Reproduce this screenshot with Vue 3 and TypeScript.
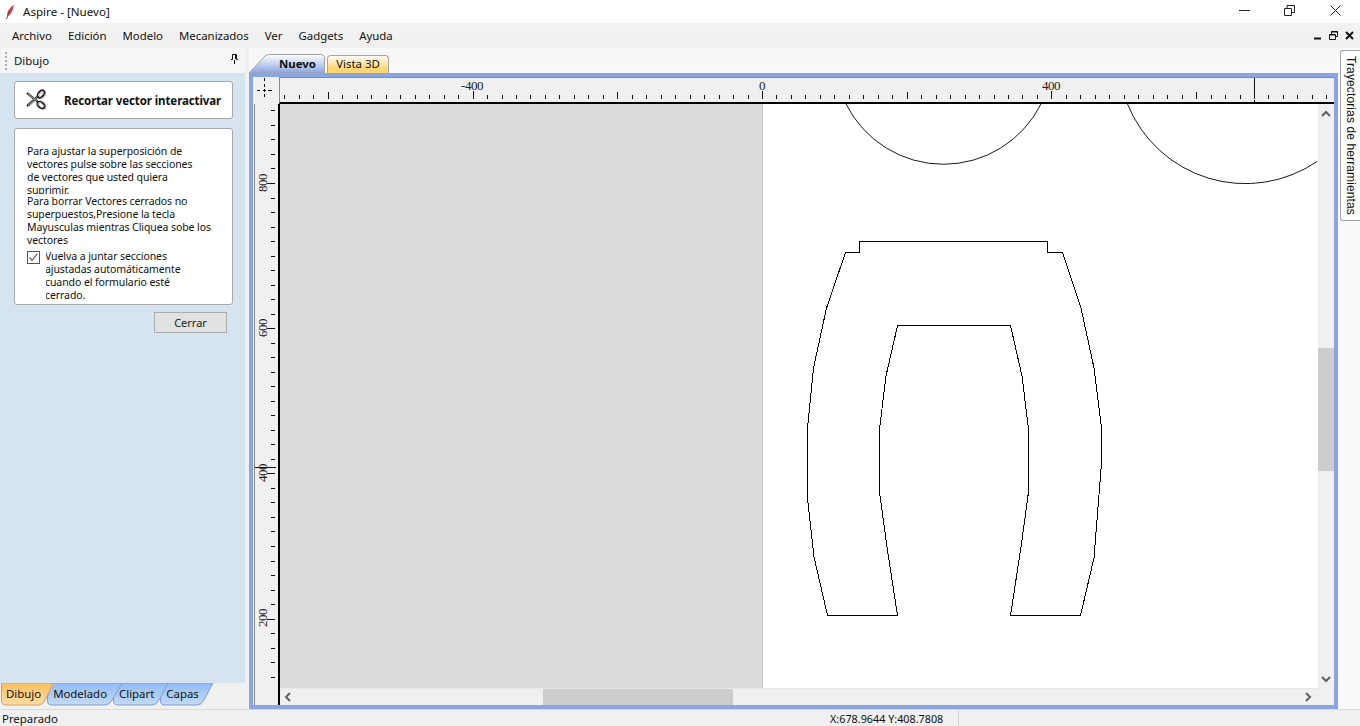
<script setup lang="ts">
const menus = ['Archivo', 'Edición', 'Modelo', 'Mecanizados', 'Ver', 'Gadgets', 'Ayuda']

const X0 = 482
const STEP = 14.47
const hTicks: { x: number; h: number }[] = []
for (let i = -33; i < 40; i++) {
  const x = Math.round(X0 + i * STEP)
  if (x < 0 || x > 1050) continue
  const m = ((i % 20) + 20) % 20
  hTicks.push({ x, h: m === 0 ? 8 : m === 10 ? 7 : 4 })
}
const vTicks: { y: number; w: number }[] = []
for (let i = -5; i < 36; i++) {
  const y = Math.round(79 + i * 14.52)
  if (y > 575) continue
  const m = ((i % 10) + 10) % 10
  vTicks.push({ y, w: m === 0 ? 8 : 4 })
}
const hLabels = [
  { x: 192, t: '-400' },
  { x: 482, t: '0' },
  { x: 771, t: '400' },
]
const vLabels = [
  { y: 79, t: '800' },
  { y: 224, t: '600' },
  { y: 369, t: '400' },
  { y: 514, t: '200' },
]
const trousers =
  '859.5,241.5 1047.5,241.5 1047.5,252.5 1062.5,252.5 1081,308 1094,368 1101.5,428 1101.5,463 1094,558 1080.5,615.5 1010.5,615.5 1021,547 1028.5,492 1028.5,429 1022,376 1010.5,325.5 897.5,325.5 886,376 879.5,429 879.5,492 887,547 897.5,615.5 827.5,615.5 814,557 807.5,498 807.5,428 813.5,368 826.5,308 845.5,252.5 859.5,252.5'
</script>

<template>
  <div class="app">
    <header class="titlebar">
      <svg class="quill" width="14" height="16" viewBox="0 0 14 16">
        <path d="M10 1 C6 3 3.500 6.500 3 11 L3.500 12.500 C7 10.500 9 6.500 10 1 Z" fill="#c0474c" />
        <path d="M5.500 7 L2.500 15" stroke="#a8323a" stroke-width="1" fill="none" />
      </svg>
      <span class="title">Aspire - [Nuevo]</span>
      <div class="winbtns">
        <svg width="11" height="11" viewBox="0 0 11 11"><path d="M0 5.500H11" stroke="#222" fill="none" /></svg>
        <svg width="11" height="11" viewBox="0 0 11 11">
          <path d="M.5 3.500H7.500V10.500H.5ZM3 3.500V.5H10.500V7.500H7.500" stroke="#222" fill="none" />
        </svg>
        <svg width="11" height="11" viewBox="0 0 11 11"><path d="M.5 .5L10.500 10.500M10.500 .5L.5 10.500" stroke="#222" fill="none" /></svg>
      </div>
    </header>

    <nav class="menubar">
      <span v-for="m in menus" :key="m" class="menuitem">{{ m }}</span>
      <div class="mdibtns">
        <svg width="9" height="9" viewBox="0 0 9 9"><path d="M1 7.500H8" stroke="#111" stroke-width="2" /></svg>
        <svg width="9" height="9" viewBox="0 0 9 9">
          <path d="M.5 3.500H6.500V8.500H.5ZM.5 4H6.500M2.500 3V.5H8.500V5.500H7M2.500 1H8.500" stroke="#111" fill="none" />
        </svg>
        <svg width="9" height="9" viewBox="0 0 9 9"><path d="M1 1L8 8M8 1L1 8" stroke="#111" stroke-width="2" /></svg>
      </div>
    </nav>

    <div class="body">
      <aside class="leftpane">
        <div class="panelhead">
          <i class="grip"></i>
          <span>Dibujo</span>
          <svg class="pin" width="9" height="10" viewBox="0 0 9 10">
            <path d="M2.500 .5H6.500V5.500H8M1 5.500H2.500V.5M4.500 6V10M5.500 1V5" stroke="#111" fill="none" />
          </svg>
        </div>
        <div class="panelbody">
          <div class="cmdcard">
            <svg class="scissors" width="24" height="24" viewBox="0 0 24 24">
              <g fill="none" stroke="#aaa" stroke-width="2" transform="translate(1 1)" opacity=".5">
                <path d="M2 5L13 14M2 18L13 8" />
                <ellipse cx="16" cy="6" rx="4" ry="2.500" transform="rotate(-50 16 6)" />
                <ellipse cx="16" cy="17" rx="4" ry="2.600" transform="rotate(40 16 17)" />
              </g>
              <g fill="none" stroke="#222" stroke-width="2.200">
                <path d="M2 5L13 14M2 18L13 8" />
                <ellipse cx="16" cy="6" rx="4" ry="2.500" transform="rotate(-50 16 6)" />
                <ellipse cx="16" cy="17" rx="4" ry="2.600" transform="rotate(40 16 17)" />
              </g>
              <g fill="none" stroke="#e8c8c8" stroke-width=".8">
                <path d="M3 5.800L12 13.200M3 17.200L12 8.800" stroke="#ccc" />
                <ellipse cx="16" cy="6" rx="3.200" ry="1.700" transform="rotate(-50 16 6)" />
                <ellipse cx="16" cy="17" rx="3.200" ry="1.800" transform="rotate(40 16 17)" />
              </g>
            </svg>
            <strong>Recortar vector interactivar</strong>
          </div>
          <div class="infocard">
            <div class="para">
              Para ajustar la superposición de<br />vectores pulse sobre las secciones<br />de vectores que usted quiera<br />suprimir.
            </div>
            <div class="para">
              Para borrar Vectores cerrados no<br />superpuestos,Presione la tecla<br />Mayusculas mientras Cliquea sobe los<br />vectores
            </div>
            <div class="checkrow">
              <span class="checkbox">
                <svg width="11" height="11" viewBox="0 0 11 11"><path d="M1.500 5.500L4 8.500L9.500 1.500" stroke="#666" stroke-width="1.200" fill="none" /></svg>
              </span>
              <div class="checklabel">
                <div class="checktext">Vuelva a juntar secciones<br />ajustadas automáticamente<br />cuando el formulario esté<br />cerrado.</div>
              </div>
            </div>
          </div>
          <div class="closerow"><button class="closebtn">Cerrar</button></div>
        </div>
        <div class="bottomtabs">
          <svg class="tabshapes" width="220" height="26" viewBox="0 0 220 26">
            <defs>
              <linearGradient id="bluetab" x1="0" y1="0" x2="0" y2="1">
                <stop offset="0" stop-color="#8fbcf5" />
                <stop offset="1" stop-color="#c5daf6" />
              </linearGradient>
              <linearGradient id="orangetab" x1="0" y1="0" x2="0" y2="1">
                <stop offset="0" stop-color="#ffbf5c" />
                <stop offset="1" stop-color="#ffdca6" />
              </linearGradient>
            </defs>
            <path d="M160.500 14L164 0H213L204 17Q201.500 22 197 22H165Q160.500 22 160.500 18Z" fill="url(#bluetab)" stroke="#7d9fd6" />
            <path d="M113.500 14L118 0H168L159 17Q156.500 22 152 22H118Q113.500 22 113.500 18Z" fill="url(#bluetab)" stroke="#7d9fd6" />
            <path d="M47.500 14L52 0H122L112 17Q109.500 22 105 22H52Q47.500 22 47.500 18Z" fill="url(#bluetab)" stroke="#7d9fd6" />
            <path d="M1.500 0V17Q1.500 22 6 22H38Q43 22 45 17L53.500 0Z" fill="url(#orangetab)" stroke="#d79c58" />
          </svg>
          <span class="btab t1">Dibujo</span>
          <span class="btab t2">Modelado</span>
          <span class="btab t3">Clipart</span>
          <span class="btab t4">Capas</span>
        </div>
      </aside>

      <main class="main">
        <div class="doctabs">
          <div class="doctab active">
            <svg class="activeshape" width="77" height="19" viewBox="0 0 77 19">
              <defs>
                <linearGradient id="acttab" x1="0" y1="0" x2="0" y2="1">
                  <stop offset="0" stop-color="#ffffff" />
                  <stop offset="1" stop-color="#8aa6e0" />
                </linearGradient>
              </defs>
              <path d="M0 19L16 2Q18 .5 21 .5H72Q75.500 .5 75.500 4V19Z" fill="url(#acttab)" stroke="#a4a4a4" />
            </svg>
            <span>Nuevo</span>
          </div>
          <div class="doctab yellow"><span>Vista 3D</span></div>
        </div>
        <div class="frame">
          <div class="rulerrow">
            <div class="corner">
              <svg width="26" height="27" viewBox="0 0 26 27">
                <path d="M11.500 1V4M11.500 7V10M11.500 12V15M11.500 17V20M4 13.500H7M10 13.500H13M15 13.500H19" stroke="#111" fill="none" />
              </svg>
            </div>
            <svg class="hruler" width="1054" height="24" viewBox="0 0 1054 24">
              <path v-for="t in hTicks" :key="t.x" :d="`M${t.x + 0.5} ${21 - t.h}V21`" stroke="#111" />
              <text v-for="l in hLabels" :key="l.t" :x="l.x" y="12" text-anchor="middle" class="rulertext">{{ l.t }}</text>
              <path d="M974.500 0V20M974.500 22V24" stroke="#111" />
            </svg>
          </div>
          <div class="workrow">
            <svg class="vruler" width="23" height="601" viewBox="0 0 23 601">
              <path v-for="t in vTicks" :key="t.y" :d="`M${20 - t.w} ${t.y + 0.5}H20`" stroke="#111" />
              <text
                v-for="l in vLabels"
                :key="l.t"
                class="rulertext"
                text-anchor="middle"
                :transform="`translate(12 ${l.y}) rotate(-90)`"
              >{{ l.t }}</text>
              <path d="M0 363.500H21" stroke="#111" />
            </svg>
            <div class="canvaswrap">
              <div class="canvas">
                <div class="offsheet"></div>
                <svg class="drawing" width="1038" height="584" viewBox="280 104 1038 584" shape-rendering="crispEdges">
                  <polygon :points="trousers" fill="none" stroke="#000" />
                  <path d="M846 104A109 109 0 0 0 1041 104" fill="none" stroke="#000" shape-rendering="geometricPrecision" stroke-width=".9" />
                  <path d="M1127.500 104A127 127 0 0 0 1317 161.500" fill="none" stroke="#000" shape-rendering="geometricPrecision" stroke-width=".9" />
                </svg>
              </div>
              <div class="vscroll">
                <svg class="arrow" width="10" height="8" viewBox="0 0 10 8"><path d="M1 6L5 2L9 6" stroke="#606060" stroke-width="2" fill="none" /></svg>
                <div class="vtrack"><i class="vthumb"></i></div>
                <svg class="arrow" width="10" height="8" viewBox="0 0 10 8"><path d="M1 2L5 6L9 2" stroke="#606060" stroke-width="2" fill="none" /></svg>
              </div>
              <div class="hscroll">
                <svg class="arrow" width="8" height="10" viewBox="0 0 8 10"><path d="M6 1L2 5L6 9" stroke="#606060" stroke-width="2" fill="none" /></svg>
                <div class="htrack"><i class="hthumb"></i></div>
                <svg class="arrow" width="8" height="10" viewBox="0 0 8 10"><path d="M2 1L6 5L2 9" stroke="#606060" stroke-width="2" fill="none" /></svg>
              </div>
              <div class="scrollcorner"></div>
            </div>
          </div>
        </div>
      </main>

      <aside class="rightdock">
        <div class="vtab">Trayectorias de herramientas</div>
      </aside>
    </div>

    <footer class="status">
      <span class="ready">Preparado</span>
      <span class="coords">X:678.9644 Y:408.7808</span>
      <i class="sep"></i>
    </footer>
  </div>
</template>

<style scoped>
.app {
  width: 1360px;
  height: 726px;
  display: flex;
  flex-direction: column;
  overflow: hidden;
  background: #f0f0f0;
  font-family: "Noto Sans", "Liberation Sans", sans-serif;
  font-size: 11.4px;
  color: #111;
}
.titlebar {
  height: 23px;
  flex: none;
  display: flex;
  align-items: center;
  background: #fff;
  padding-left: 4px;
}
.quill { flex: none; }
.title { margin-left: 5px; font-size: 11.6px; }
.winbtns {
  margin-left: auto;
  display: flex;
  gap: 34px;
  padding-right: 19px;
  margin-bottom: 2px;
  align-items: center;
}
.winbtns svg:last-child { margin-left: 1px; }
.menubar {
  height: 25px;
  flex: none;
  display: flex;
  align-items: center;
  padding-left: 12px;
  gap: 16px;
  background: linear-gradient(#f2f2f2, #f0f0f0);
}
.mdibtns {
  margin-left: auto;
  display: flex;
  gap: 7px;
  padding-right: 6px;
  align-items: center;
}
.body {
  height: 661px;
  flex: none;
  display: flex;
}
.leftpane {
  width: 249px;
  flex: none;
  display: flex;
  flex-direction: column;
  padding-right: 4px;
  box-sizing: border-box;
}
.panelhead {
  height: 25px;
  flex: none;
  display: flex;
  align-items: center;
  background: #f6f6f6;
  margin-left: 1px;
  padding-left: 4px;
  position: relative;
}
.grip {
  width: 2px;
  height: 18px;
  border-left: 2px dotted #a8a8a8;
  margin-right: 5px;
}
.pin { margin-left: auto; margin-right: 6px; margin-top: -3px; }
.panelbody {
  flex: 1;
  background: #d6e4f2;
  padding: 8px 12px 0 14px;
  min-height: 0;
}
.cmdcard {
  height: 36px;
  background: #fff;
  border: 1px solid #a9a9a9;
  border-radius: 3px;
  display: flex;
  align-items: center;
  padding-left: 10px;
}
.scissors { flex: none; }
.cmdcard strong {
  margin-left: 15px;
  font-weight: 700;
  white-space: nowrap;
  font-size: 11.5px;
  letter-spacing: -0.1px;
}
.infocard {
  margin-top: 9px;
  height: 177px;
  background: #fff;
  border: 1px solid #a9a9a9;
  border-radius: 3px;
  padding: 16px 0 0 12px;
  box-sizing: border-box;
  font-size: 10.5px;
  letter-spacing: -0.08px;
  line-height: 13px;
  overflow: hidden;
}
.para {
  height: 49px;
  margin-bottom: 1px;
  overflow: hidden;
  white-space: nowrap;
}
.checkrow {
  display: flex;
  margin-top: 6px;
}
.checkbox {
  width: 11px;
  height: 11px;
  flex: none;
  border: 1px solid #555;
  margin-top: 1px;
  background: #fff;
  display: block;
}
.checkbox svg { display: block; }
.checklabel {
  margin-left: 6px;
  overflow: hidden;
  width: 170px;
}
.checktext {
  margin-left: -1px;
  white-space: nowrap;
}
.closerow {
  display: flex;
  justify-content: flex-end;
  margin-top: 7px;
  padding-right: 6px;
}
.closebtn {
  width: 73px;
  height: 21px;
  background: #e1e1e1;
  border: 1px solid #adadad;
  font: inherit;
  font-size: 11px;
  color: #222;
  padding: 0;
}
.bottomtabs {
  height: 26px;
  flex: none;
  position: relative;
  display: flex;
  padding-top: 3px;
  box-sizing: border-box;
}
.tabshapes {
  position: absolute;
  left: 0;
  top: 0;
}
.btab {
  position: relative;
  line-height: 16px;
}
.t1 { margin-left: 6px; }
.t2 { margin-left: 12px; }
.t3 { margin-left: 12px; }
.t4 { margin-left: 12px; }
.main {
  width: 1089px;
  flex: none;
  display: flex;
  flex-direction: column;
}
.doctabs {
  height: 25px;
  flex: none;
  display: flex;
  align-items: flex-end;
  background: linear-gradient(#f7f7f7, #f9f9f9);
}
.doctab {
  position: relative;
  height: 18px;
  display: flex;
  align-items: center;
  justify-content: center;
  padding-bottom: 2px;
  box-sizing: border-box;
}
.doctab span { position: relative; }
.active {
  width: 77px;
  font-weight: 700;
  padding-left: 20px;
}
.activeshape {
  position: absolute;
  left: 0;
  bottom: 0;
}
.yellow {
  width: 62px;
  margin-left: 1px;
  background: linear-gradient(#ffffff, #ffd672 70%);
  border: 1px solid #a4a4a4;
  border-bottom: 0;
  border-radius: 4px 4px 0 0;
}
.frame {
  flex: 1;
  min-height: 0;
  background: #f0f0f0;
  border: 4px solid #8aa6e0;
  display: flex;
  flex-direction: column;
}
.rulerrow {
  height: 27px;
  flex: none;
  display: flex;
}
.corner {
  width: 26px;
  flex: none;
}
.corner svg { display: block; }
.hruler {
  display: block;
  border-top: 1px solid #8a8a8a;
  border-left: 1px solid #8a8a8a;
  border-bottom: 2px solid #000;
  flex: none;
}
.workrow {
  flex: 1;
  min-height: 0;
  display: flex;
}
.vruler {
  display: block;
  flex: none;
  margin-left: 1px;
  border-left: 1px solid #8a8a8a;
  border-right: 2px solid #000;
}
.rulertext {
  font-family: "Liberation Serif", serif;
  font-size: 13px;
  letter-spacing: -0.5px;
  fill: #222;
}
.canvaswrap {
  flex: 1;
  min-width: 0;
  display: grid;
  grid-template-columns: 1fr 16px;
  grid-template-rows: 1fr 17px;
}
.canvas {
  position: relative;
  background: #fff;
  overflow: hidden;
}
.offsheet {
  position: absolute;
  left: 0;
  top: 0;
  bottom: 0;
  width: 482px;
  background: #dcdcdc;
  border-right: 1px solid #c4c4c4;
}
.drawing {
  position: absolute;
  left: 0;
  top: 0;
  display: block;
}
.vscroll {
  display: flex;
  flex-direction: column;
  align-items: center;
  padding: 6px 0 5px;
  box-sizing: border-box;
  background: #f0f0f0;
}
.vtrack {
  flex: 1;
  width: 100%;
  position: relative;
}
.vthumb {
  position: absolute;
  left: 0;
  right: 0;
  top: 230px;
  height: 123px;
  background: #cdcdcd;
}
.hscroll {
  display: flex;
  align-items: center;
  padding: 0 6px 0 4px;
  background: #f0f0f0;
  border-top: 1px solid #e8e8e8;
}
.htrack {
  flex: 1;
  height: 100%;
  position: relative;
}
.hthumb {
  position: absolute;
  left: 251px;
  width: 190px;
  top: 0;
  bottom: 0;
  background: #cdcdcd;
}
.arrow { flex: none; display: block; }
.scrollcorner { background: #f0f0f0; }
.rightdock {
  flex: 1;
  background: #fafafa;
  position: relative;
}
.vtab {
  position: absolute;
  left: 2px;
  top: 2px;
  width: 20px;
  height: 171px;
  box-sizing: border-box;
  background: #fff;
  border: 1px solid #a4a4a4;
  border-right: 0;
  border-radius: 3px 0 0 3px;
  writing-mode: vertical-rl;
  font-family: "Liberation Sans", sans-serif;
  font-size: 12px;
  letter-spacing: 0.12px;
  line-height: 18px;
  padding-top: 5px;
  white-space: nowrap;
}
.status {
  height: 17px;
  flex: none;
  display: flex;
  align-items: center;
  border-top: 1px solid #d9d9d9;
  box-sizing: border-box;
  position: relative;
  padding: 1px 0 0 2px;
}
.coords {
  position: absolute;
  left: 830px;
  font-size: 10.8px;
}
.sep {
  position: absolute;
  left: 958px;
  top: 0;
  bottom: 0;
  width: 1px;
  background: #d4d4d4;
}
</style>
